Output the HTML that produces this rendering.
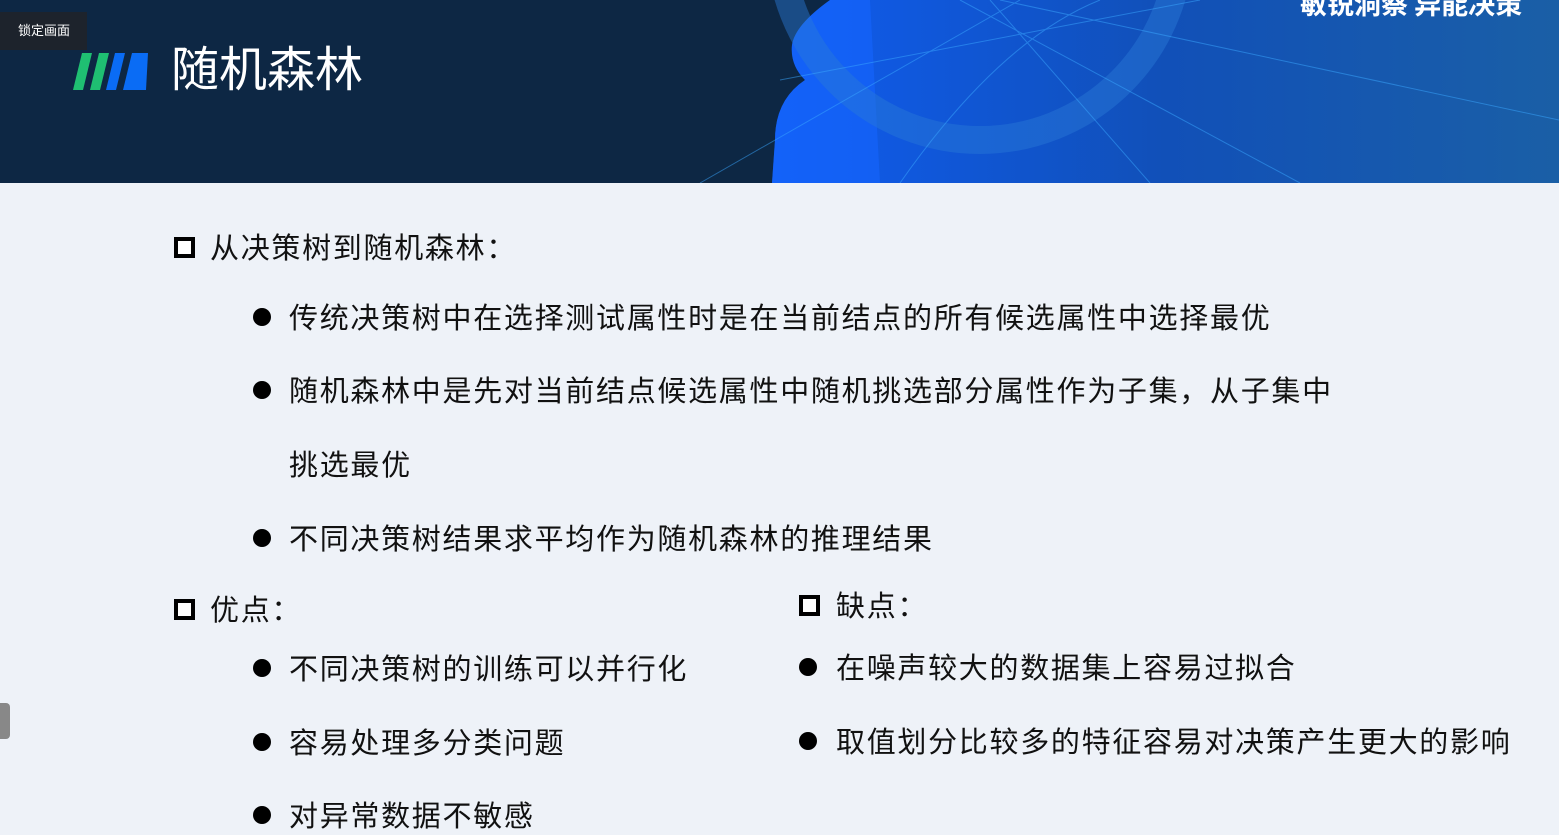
<!DOCTYPE html>
<html><head><meta charset="utf-8"><style>
*{margin:0;padding:0;box-sizing:border-box}
body{width:1559px;height:835px;overflow:hidden;background:#eef2f8;position:relative;font-family:"Liberation Sans","Noto Sans CJK SC",sans-serif;color:#111}
.hdr{position:absolute;left:0;top:0;width:1559px;height:183px;background:#0d2744;overflow:hidden}
.t{position:absolute;white-space:nowrap;font-size:29px;letter-spacing:1.7px;line-height:1;margin-top:2px}
.dot{position:absolute;width:18px;height:18px;border-radius:50%;background:#000}
.sq{position:absolute;width:21px;height:21px;border:4px solid #000;background:#fff}
</style></head><body>
<div class="hdr">
<svg width="1559" height="183" style="position:absolute;left:0;top:0">
<defs><linearGradient id="g" x1="0" y1="0" x2="1" y2="0"><stop offset="0" stop-color="#0f5cf0"/><stop offset="0.5" stop-color="#1150b8"/><stop offset="1" stop-color="#1a5fa6"/></linearGradient></defs>
<path d="M830 0 Q795 25 792 45 Q790 65 805 80 Q775 100 775 140 L772 183 L1559 183 L1559 0 Z" fill="url(#g)"/>
<path d="M830 0 Q795 25 792 45 Q790 65 805 80 Q775 100 775 140 L772 183 L880 183 L870 0Z" fill="#1566ff" opacity="0.6"/>
<circle cx="980" cy="-60" r="200" fill="none" stroke="#2a7ad8" stroke-width="28" opacity="0.45"/>
<g stroke="#3aa8ff" stroke-width="1" opacity="0.5" fill="none">
<path d="M700 183 L1020 0"/><path d="M900 183 Q1000 40 1100 0"/><path d="M1300 183 L960 0"/><path d="M1559 120 L1000 0"/><path d="M780 80 L1200 0"/><path d="M1150 183 L990 0"/>
</g>
<text x="1300" y="14" fill="#fff" font-size="27" font-weight="bold" font-family="Noto Sans CJK SC">敏锐洞察 异能决策</text>
</svg>
<div style="position:absolute;left:0;top:12px;width:87px;height:38px;background:#1d232c;color:#fff;font-size:13px;line-height:38px;padding-left:18px">锁定画面</div>
<svg width="80" height="40" style="position:absolute;left:72px;top:51px">
<path d="M10 2 H20 L11 39 H1Z" fill="#1fbf72"/><path d="M27 2 H37 L28 39 H18Z" fill="#1fbf72"/>
<path d="M43 2 H53 L44 39 H34Z" fill="#0a6cf5"/><path d="M60 2 H76 L74 39 H51Z" fill="#0a6cf5"/>
</svg>
<div style="position:absolute;left:171px;top:47px;color:#fff;font-size:48px;line-height:1">随机森林</div>
</div>
<div class="sq" style="left:174px;top:237px"></div><div class="t" style="left:210px;top:233px">从决策树到随机森林：</div>
<div class="dot" style="left:253px;top:308px"></div><div class="t" style="left:289px;top:303px">传统决策树中在选择测试属性时是在当前结点的所有候选属性中选择最优</div>
<div class="dot" style="left:253px;top:381px"></div><div class="t" style="left:289px;top:376px">随机森林中是先对当前结点候选属性中随机挑选部分属性作为子集，从子集中</div>
<div class="t" style="left:289px;top:450px">挑选最优</div>
<div class="dot" style="left:253px;top:529px"></div><div class="t" style="left:289px;top:524px">不同决策树结果求平均作为随机森林的推理结果</div>
<div class="sq" style="left:174px;top:599px"></div><div class="t" style="left:210px;top:595px">优点：</div>
<div class="dot" style="left:253px;top:659px"></div><div class="t" style="left:289px;top:654px">不同决策树的训练可以并行化</div>
<div class="dot" style="left:253px;top:733px"></div><div class="t" style="left:289px;top:728px">容易处理多分类问题</div>
<div class="dot" style="left:253px;top:806px"></div><div class="t" style="left:289px;top:801px">对异常数据不敏感</div>
<div class="sq" style="left:799px;top:595px"></div><div class="t" style="left:836px;top:591px">缺点：</div>
<div class="dot" style="left:799px;top:658px"></div><div class="t" style="left:836px;top:653px">在噪声较大的数据集上容易过拟合</div>
<div class="dot" style="left:799px;top:732px"></div><div class="t" style="left:836px;top:727px">取值划分比较多的特征容易对决策产生更大的影响</div>
<div style="position:absolute;left:0;top:703px;width:10px;height:36px;background:#888;border-radius:0 4px 4px 0"></div>
</body></html>
